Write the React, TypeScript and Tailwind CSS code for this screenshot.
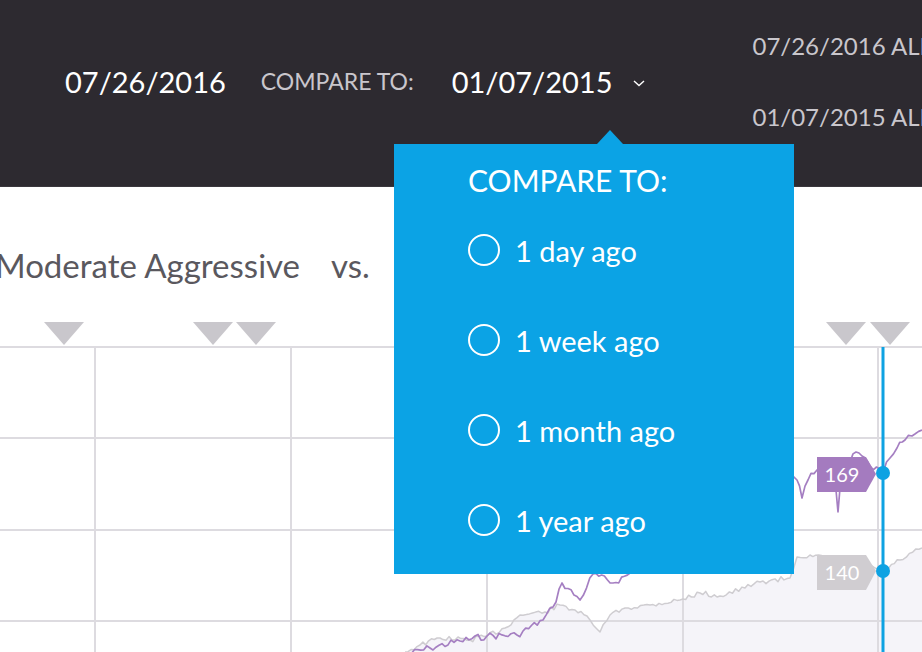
import React from "react";

type P = [number, number];

function jitter(anchors: P[], seed: number, amp: number): P[] {
  const out: P[] = [];
  let s = seed;
  const rnd = () => {
    s = (s * 9301 + 49297) % 233280;
    return s / 233280;
  };
  for (let i = 0; i < anchors.length - 1; i++) {
    const [x0, y0] = anchors[i];
    const [x1, y1] = anchors[i + 1];
    const steps = Math.max(1, Math.round((x1 - x0) / 3));
    for (let k = 0; k < steps; k++) {
      const t = k / steps;
      const x = x0 + (x1 - x0) * t;
      const y = y0 + (y1 - y0) * t + (k === 0 ? 0 : (rnd() - 0.5) * amp);
      out.push([x, y]);
    }
  }
  out.push(anchors[anchors.length - 1]);
  return out;
}

const OY = 315;
const toPath = (pts: P[]) =>
  pts.map((p, i) => `${i ? "L" : "M"}${p[0].toFixed(1)},${(p[1] - OY).toFixed(1)}`).join(" ");

const purpleAnchors: P[] = [
  [405, 655], [430, 648], [460, 641], [487, 636], [517, 635], [543, 620], [553, 607],
  [562, 583], [580, 600], [593, 574], [613, 583], [633, 572], [660, 560], [700, 540],
  [740, 515], [770, 495], [790, 478], [797, 480], [802, 498], [808, 480], [817, 470],
  [834, 472], [836, 490], [838, 512], [840, 488], [850, 462], [856, 452], [862, 456],
  [870, 466], [883, 473], [890, 458], [897, 448], [905, 440], [912, 436], [922, 430],
];

const grayAnchors: P[] = [
  [405, 652], [420, 645], [440, 638], [470, 640], [487, 636], [505, 628], [520, 615],
  [545, 612], [560, 605], [575, 610], [590, 620], [600, 632], [610, 615], [625, 608],
  [650, 605], [680, 600], [700, 593], [720, 596], [745, 588], [760, 582], [790, 578],
  [797, 557], [810, 555], [830, 560], [860, 564], [883, 571], [900, 560], [922, 548],
];

function Chart() {
  const purple = jitter(purpleAnchors, 7, 7);
  const gray = jitter(grayAnchors, 13, 5);
  const grayPath = toPath(gray);
  const fillPath = `${grayPath} L922,${652 - OY} L405,${652 - OY} Z`;
  const tris = [64, 213, 256, 846, 890];
  const hLines = [347, 438, 530, 621];
  const vLines = [95, 291, 487, 683, 878];
  return (
    <svg width={922} height={337} viewBox="0 0 922 337" className="block">
      <path d={fillPath} fill="#f5f4f9" />
      {hLines.map((y) => (
        <line key={y} x1={0} x2={922} y1={y - OY} y2={y - OY} stroke="#dddbe0" strokeWidth={2} />
      ))}
      {vLines.map((x) => (
        <line key={x} x1={x} x2={x} y1={347 - OY} y2={337} stroke="#dddbe0" strokeWidth={2} />
      ))}
      {tris.map((x) => (
        <polygon key={x} points={`${x - 20},${322 - OY} ${x + 20},${322 - OY} ${x},${345 - OY}`} fill="#c9c7cc" />
      ))}
      <path d={grayPath} fill="none" stroke="#cfcdd1" strokeWidth={1.5} strokeLinejoin="round" />
      <path d={toPath(purple)} fill="none" stroke="#a57fc2" strokeWidth={1.7} strokeLinejoin="round" />
      <line x1={883} x2={883} y1={347 - OY} y2={337} stroke="#0ea2e2" strokeWidth={3} />
      <polygon points={`817,${457 - OY} 866,${457 - OY} 876,${474 - OY} 866,${492 - OY} 817,${492 - OY}`} fill="#a47bbf" />
      <text x={842} y={482 - OY} textAnchor="middle" fill="#ffffff" fontSize={20} fontFamily="Lato, sans-serif">169</text>
      <polygon points={`817,${555 - OY} 866,${555 - OY} 876,${571 - OY} 866,${590 - OY} 817,${590 - OY}`} fill="#d0cdd1" />
      <text x={842} y={580 - OY} textAnchor="middle" fill="#ffffff" fontSize={20} fontFamily="Lato, sans-serif">140</text>
      <circle cx={883} cy={473 - OY} r={7} fill="#0ea2e2" />
      <circle cx={883} cy={571 - OY} r={7} fill="#0ea2e2" />
    </svg>
  );
}

function Radio({ label }: { label: string }) {
  return (
    <div className="flex items-center h-[90px]">
      <span className="w-8 h-8 rounded-full border-2 border-white shrink-0" />
      <span className="ml-[15px] text-[29px] leading-none text-white">{label}</span>
    </div>
  );
}

export default function App() {
  return (
    <div
      className="relative w-[922px] h-[652px] overflow-hidden bg-white"
      style={{ fontFamily: "Lato, 'Noto Sans', sans-serif" }}
    >
      <header className="h-[187px] bg-[#2d2a30] border-b border-[#3a373d] overflow-hidden">
        <div className="flex items-center h-[162px] pl-[65px] whitespace-nowrap">
          <span className="shrink-0 text-[29px] text-white leading-none">07/26/2016</span>
          <span className="shrink-0 ml-[35px] text-[23px] text-[#c9c6cc] leading-none">COMPARE TO:</span>
          <span className="shrink-0 ml-[38px] text-[29px] text-white leading-none">01/07/2015</span>
          <svg width="16" height="10" viewBox="0 0 16 10" className="shrink-0 ml-[18px] mt-[4px]">
            <path d="M3 3 L8 7.5 L13 3" fill="none" stroke="#ffffff" strokeWidth="1.4" />
          </svg>
          <div className="shrink-0 ml-[106px] flex flex-col gap-[45px] text-[24px] text-[#c9c6cc] leading-[26px]">
            <span>07/26/2016 ALL</span>
            <span>01/07/2015 ALL</span>
          </div>
        </div>
      </header>

      <div className="h-[128px] pt-[58px]">
        <div className="pl-[1px] -ml-[6px] text-[33px] leading-[40px] text-[#5a585e] whitespace-nowrap">
          Moderate Aggressive<span className="ml-[31px]">vs.</span>
        </div>
      </div>

      <Chart />

      <div className="absolute left-[394px] top-[144px] w-[400px] h-[430px] bg-[#0ba3e5] pl-[74px] pt-[20px]">
        <div className="absolute -top-[14px] left-[203px] w-0 h-0 border-l-[13px] border-r-[13px] border-b-[14px] border-l-transparent border-r-transparent border-b-[#0ba3e5]" />
        <div className="text-[30px] leading-[32px] text-white">COMPARE TO:</div>
        <div className="mt-[9px]">
          <Radio label="1 day ago" />
          <Radio label="1 week ago" />
          <Radio label="1 month ago" />
          <Radio label="1 year ago" />
        </div>
      </div>
    </div>
  );
}
